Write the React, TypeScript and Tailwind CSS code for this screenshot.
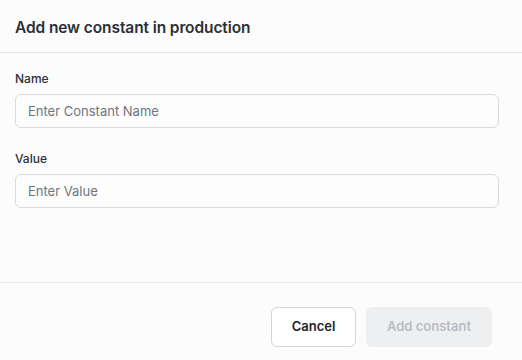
export default function App() {
  return (
    <div className="flex h-[360px] w-[522px] flex-col bg-[#fcfcfd] font-['Inter',sans-serif] text-[#2b3036]">
      <div className="flex h-[53px] shrink-0 items-center border-b border-[#e4e6ea] px-[15px] pt-[4px]">
        <h2 className="text-[15.5px] font-semibold tracking-[-0.1px]">Add new constant in production</h2>
      </div>
      <div className="flex flex-1 flex-col px-[15px] pt-[17px]">
        <label className="mb-[6px] text-[12px] font-medium">Name</label>
        <input
          placeholder="Enter Constant Name"
          className="mr-[8px] h-[34px] rounded-md border border-[#d9dbdf] bg-[#fdfdfe] px-[12px] text-[13px] text-[#2b3036] placeholder:text-[#6f757c] outline-none"
        />
        <label className="mb-[6px] mt-[22px] text-[12px] font-medium">Value</label>
        <input
          placeholder="Enter Value"
          className="mr-[8px] h-[34px] rounded-md border border-[#d9dbdf] bg-[#fdfdfe] px-[12px] text-[13px] text-[#2b3036] placeholder:text-[#6f757c] outline-none"
        />
      </div>
      <div className="flex h-[78px] shrink-0 items-center justify-end gap-[10px] border-t border-[#e4e6ea] pr-[30px] pt-[10px]">
        <button className="h-[40px] w-[85px] rounded-md border border-[#d3d5d9] bg-white text-[13px] font-semibold text-[#202428]">
          Cancel
        </button>
        <button
          disabled
          className="h-[40px] w-[126px] rounded-md bg-[#eeeff1] text-[13px] font-semibold text-[#b9bdc3]"
        >
          Add constant
        </button>
      </div>
    </div>
  );
}
